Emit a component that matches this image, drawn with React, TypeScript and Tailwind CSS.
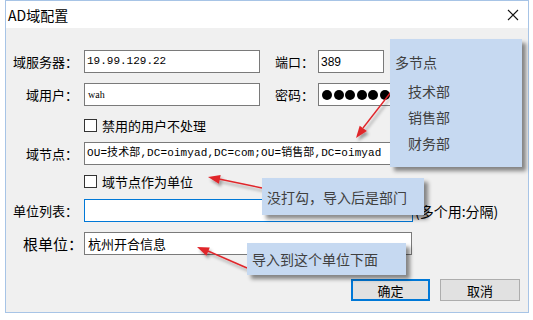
import {FC, ReactNode} from "react";

const cjk = "font-['Noto_Sans_CJK_SC',sans-serif]";
const mono = "font-['Liberation_Mono','Noto_Sans_CJK_SC',monospace]";

const Label: FC<{children: ReactNode; className?: string}> = ({children, className}) => (
    <span className={`text-[13px] leading-none whitespace-nowrap ${className ?? ""}`}>{children}</span>
);

const Box: FC<{children?: ReactNode; className?: string}> = ({children, className}) => (
    <div className={`h-[23px] bg-white border flex items-center overflow-hidden whitespace-nowrap ${className ?? ""}`}>
        {children}
    </div>
);

const Check: FC<{label: string}> = ({label}) => (
    <div className="flex items-center h-[23px] pl-[78px]">
        <span className="w-[13px] h-[13px] border border-[#333] bg-white"/>
        <span className="ml-[5px] text-[13px] leading-none">{label}</span>
    </div>
);

const Callout: FC<{children: ReactNode; className: string}> = ({children, className}) => (
    <div className={`absolute bg-[#c6d9f1] text-[#404040] text-[14px] leading-none shadow-[4px_4px_4px_rgba(0,0,0,0.45)] ${className}`}>
        {children}
    </div>
);

const App: FC = () => {
    return (
        <div className={`relative w-[533px] h-[320px] bg-white overflow-hidden text-black ${cjk}`}>
            <div className="ml-[5px] w-[524px] h-[313px] border border-[#a7c4e6] flex flex-col">
                {/* title bar */}
                <div className="h-[27px] bg-white flex items-center justify-between pl-[2px] pr-[9px]">
                    <span className="text-[14px] leading-none">AD域配置</span>
                    <svg width="12" height="12" viewBox="0 0 12 12">
                        <path d="M1 1 L11 11 M11 1 L1 11" stroke="#111" strokeWidth="1.1"/>
                    </svg>
                </div>

                <div className="flex-1 bg-[#f0f0f0] pt-[22px]">
                    <div className="flex items-center h-[23px]">
                        <Label className="w-[72px] text-right">域服务器：</Label>
                        <Box className={`ml-[6px] w-[176px] border-[#7a7a7a] pl-[2px] text-[11px] ${mono}`}>19.99.129.22</Box>
                        <Label className="ml-[15px]">端口：</Label>
                        <Box className="ml-[4px] w-[66px] border-[#7a7a7a] pl-[2px] text-[12px] font-['Liberation_Sans',sans-serif]">389</Box>
                    </div>

                    <div className="flex items-center h-[23px] mt-[10px]">
                        <Label className="w-[72px] text-right">域用户：</Label>
                        <Box className="ml-[6px] w-[176px] border-[#7a7a7a] pl-[3px] text-[10px] font-['Liberation_Serif',serif]">wah</Box>
                        <Label className="ml-[15px]">密码：</Label>
                        <Box className="ml-[4px] w-[120px] border-[#7a7a7a] pl-[3px] gap-[1.5px]">
                            {[0, 1, 2, 3, 4, 5, 6].map(i => (
                                <span key={i} className="w-[10px] h-[10px] rounded-full bg-black shrink-0"/>
                            ))}
                        </Box>
                    </div>

                    <div className="mt-[8px]">
                        <Check label="禁用的用户不处理"/>
                    </div>

                    <div className="flex items-center h-[23px] mt-[5px]">
                        <Label className="w-[72px] text-right">域节点：</Label>
                        <Box className={`ml-[6px] w-[310px] border-[#7a7a7a] pl-[2px] text-[11px] tracking-[0.1px] ${mono}`}>
                            OU=技术部,DC=oimyad,DC=com;OU=销售部,DC=oimyad
                        </Box>
                    </div>

                    <div className="mt-[5px]">
                        <Check label="域节点作为单位"/>
                    </div>

                    <div className="flex items-center h-[23px] mt-[6px]">
                        <Label className="w-[72px] text-right">单位列表：</Label>
                        <Box className="ml-[6px] w-[329px] border-[#0078d7]"/>
                        <span className="ml-[2px] text-[14px] leading-none whitespace-nowrap">(多个用:分隔)</span>
                    </div>

                    <div className="flex items-center h-[23px] mt-[10px]">
                        <span className="w-[77px] text-right text-[15px] leading-none">根单位：</span>
                        <Box className="ml-[1px] w-[328px] border-[#7a7a7a] pl-[3px] text-[13px]">杭州开合信息</Box>
                    </div>

                    <div className="flex pl-[345px] gap-[10px] mt-[24px]">
                        <button className="w-[79px] h-[22px] bg-[#e1e1e1] border-2 border-[#0078d7] text-[13px] leading-none">确定</button>
                        <button className="w-[80px] h-[22px] bg-[#e1e1e1] border border-[#adadad] text-[13px] leading-none">取消</button>
                    </div>
                </div>
            </div>

            {/* annotation arrows */}
            <svg className="absolute left-0 top-0" width="533" height="320" viewBox="0 0 533 320">
                <defs>
                    <filter id="sh" x="-50%" y="-50%" width="200%" height="200%">
                        <feDropShadow dx="2" dy="3" stdDeviation="1.5" floodColor="#000" floodOpacity="0.35"/>
                    </filter>
                </defs>
                <g filter="url(#sh)" stroke="#e0262b" strokeWidth="1.4" fill="#e0262b">
                    <line x1="391" y1="92" x2="363" y2="128"/>
                    <polygon points="356,138 366.9,131.1 359.7,125.7" stroke="none"/>
                    <line x1="262" y1="188" x2="219" y2="179"/>
                    <polygon points="208,177 220.7,175 218.9,183.8" stroke="none"/>
                    <line x1="247" y1="268" x2="208" y2="251"/>
                    <polygon points="197,247 209.8,247.5 206.4,255.8" stroke="none"/>
                </g>
            </svg>

            <Callout className="left-[390px] top-[39px] w-[132px] h-[128px] pl-[5px] pt-[16px]">
                <div className="h-[14px]">多节点</div>
                <div className="pl-[13px] mt-[15px] h-[14px]">技术部</div>
                <div className="pl-[13px] mt-[12px] h-[14px]">销售部</div>
                <div className="pl-[13px] mt-[12px] h-[14px]">财务部</div>
            </Callout>

            <Callout className="left-[262px] top-[178px] w-[162px] h-[37px] pl-[5px] flex items-center">
                没打勾，导入后是部门
            </Callout>

            <Callout className="left-[247px] top-[243px] w-[159px] h-[32px] pl-[5px] flex items-center">
                导入到这个单位下面
            </Callout>
        </div>
    );
};

export default App;
